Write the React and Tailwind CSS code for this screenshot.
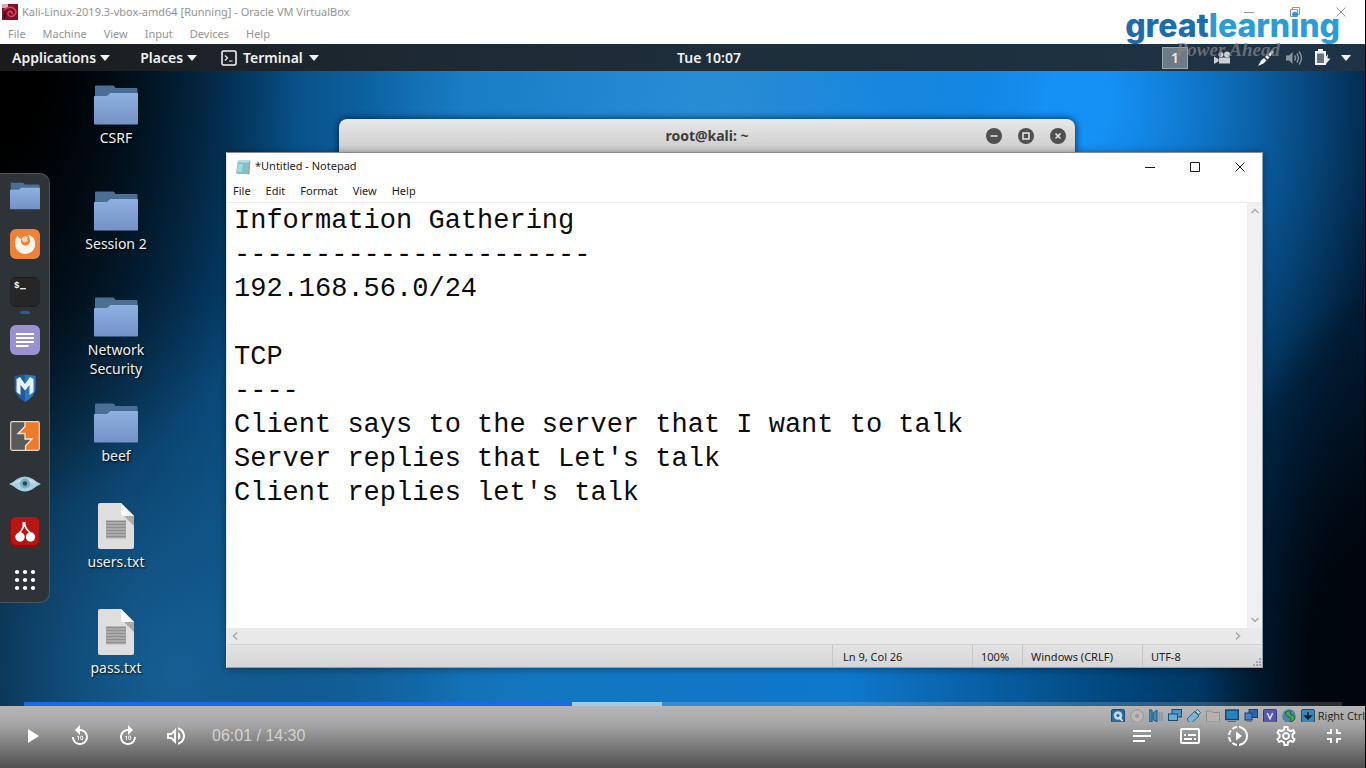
import React from "react";
import {
  MdPlayArrow,
  MdReplay10,
  MdForward10,
  MdOutlineVolumeUp,
  MdNotes,
  MdOutlineSubtitles,
  MdOutlineSlowMotionVideo,
  MdOutlineSettings,
  MdFullscreenExit,
} from "react-icons/md";

const NOTE = [
  "Information Gathering",
  "----------------------",
  "192.168.56.0/24",
  "",
  "TCP",
  "----",
  "Client says to the server that I want to talk",
  "Server replies that Let's talk",
  "Client replies let's talk",
].join("\n");

function Folder({ className }) {
  return (
    <svg viewBox="0 0 44 40" className={className} aria-hidden="true">
      <defs>
        <linearGradient id="folderFront" x1="0" y1="0" x2="0" y2="1">
          <stop offset="0" stopColor="#8db1e0" />
          <stop offset="1" stopColor="#7591c6" />
        </linearGradient>
      </defs>
      <path d="M1 1.5Q1 .5 2 .5H19Q20 .5 20.500 1.500L21.500 3H42.500Q43.500 3 43.500 4V20H1Z" fill="#4b6f94" />
      <path d="M0 12Q0 11 1 11H13L16.500 8H43Q44 8 44 9V38.500Q44 39.500 43 39.500H1Q0 39.500 0 38.500Z" fill="url(#folderFront)" />
    </svg>
  );
}

function TextFile({ className }) {
  return (
    <svg viewBox="0 0 36 46" className={className} aria-hidden="true">
      <path d="M2 0H23L36 13V44Q36 46 34 46H2Q0 46 0 44V2Q0 0 2 0Z" fill="#dedede" />
      <path d="M26 13H36V23Z" fill="#a9a9a9" />
      <path d="M23 0L36 13H25Q23 13 23 11Z" fill="#f8f8f8" />
      <path d="M8 17.500H28V35.500H8Z" fill="#b4b4b4" />
      <path d="M8 18.500H28M8 21.500H28M8 24.500H28M8 27.500H28M8 30.500H28M8 33.500H28" stroke="#8d8d8d" strokeWidth="1.300" />
    </svg>
  );
}

function Caret() {
  return (
    <svg viewBox="0 0 10 6" className="h-1.5 w-2.5" aria-hidden="true">
      <path d="M0 0H10L5 6Z" fill="#f2f2f2" />
    </svg>
  );
}

const dockIcons = [
  { name: "Files", art: <Folder className="h-7 w-[30px]" /> },
  {
    name: "Firefox",
    art: (
      <svg viewBox="0 0 30 30" className="size-[30px]">
        <rect width="30" height="30" rx="6" fill="#ee8239" />
        <path d="M5 13.500C5.500 9.500 6.500 8 7.500 6.500C8.500 8.500 9.500 9.500 11 10C10.500 13 11.500 16 14.500 16.500C17.500 17 20 15 20 12C20 10 19.500 8 18 6C22.500 6.500 25.500 10.500 25.200 15.500C24.500 21.500 20.500 25 15 25C9 25 4.800 20 5 13.500Z" fill="#fff4e8" />
        <path d="M11.500 10C13 7 16 6.500 18.500 8.500C17 9 16.500 10 18 12L14.500 13.500C13 13 12 11.500 11.500 10Z" fill="#f9d3b4" />
      </svg>
    ),
  },
  {
    name: "Terminal",
    running: true,
    art: (
      <svg viewBox="0 0 30 30" className="size-[30px]">
        <rect width="30" height="30" rx="6" fill="#1d1d1d" />
        <rect y="1" width="30" height="28" rx="5" fill="#262626" />
        <text x="4" y="11" fontSize="9" fontWeight="700" fill="#fff" fontFamily="Liberation Mono, monospace">$</text>
        <path d="M10 11.700H16" stroke="#eee" strokeWidth="1.300" />
      </svg>
    ),
  },
  {
    name: "Text Editor",
    art: (
      <svg viewBox="0 0 30 30" className="size-[30px]">
        <rect width="30" height="30" rx="6" fill="#9c91cf" />
        <path d="M6 9H24M6 13H24M6 17H24M6 21H18.500" stroke="#fff" strokeWidth="2" />
      </svg>
    ),
  },
  {
    name: "Metasploit",
    art: (
      <svg viewBox="0 0 30 30" className="size-[30px]">
        <path d="M4.500 3Q15 0 25.500 3V16Q25 23 15 29Q5 23 4.500 16Z" fill="#1f5c9c" />
        <path d="M15 2V29Q25 23 25.500 16V3Q20 1.500 15 2Z" fill="#2b78bd" />
        <path d="M6.500 6L10 4L15 11L20 4L23.500 6V19L19.500 22V12L15 17.500L10.500 12V22L6.500 19Z" fill="#e8f1f9" />
      </svg>
    ),
  },
  {
    name: "Burp Suite",
    art: (
      <svg viewBox="0 0 30 30" className="size-[30px]">
        <rect x=".5" y=".5" width="29" height="29" rx="1.500" fill="#5a5a5a" />
        <path d="M15 1H29V29H15.500V25.500L22.500 18H15V12.500H8L15 5Z" fill="#ee7a2b" />
        <path d="M15 1V5.500L8 12.500H15V18H22L15.500 25V29" fill="none" stroke="#f3e9dc" strokeWidth="1.300" />
        <rect x=".7" y=".7" width="28.600" height="28.600" rx="1.500" fill="none" stroke="#e0d6ca" strokeWidth="1.200" />
      </svg>
    ),
  },
  {
    name: "Zenmap",
    art: (
      <svg viewBox="0 0 32 30" className="h-[30px] w-8">
        <path d="M0 15Q4 13.500 8 10Q16 5 24 10Q28 13.500 32 15Q27 17 23 20.500Q16 24.500 9 20.500Q5 17 0 15Z" fill="#a9cfe0" />
        <path d="M4 14.500Q16 5.500 28 14.500Q16 9.500 4 14.500Z" fill="#d5e9f1" />
        <circle cx="16" cy="14.500" r="5" fill="#7babc1" />
        <circle cx="16" cy="14.500" r="2.200" fill="#1f4b63" />
      </svg>
    ),
  },
  {
    name: "CherryTree",
    art: (
      <svg viewBox="0 0 30 30" className="size-[30px]">
        <rect width="30" height="30" rx="5" fill="#8f0d0d" />
        <rect x="1" width="28" height="28" rx="5" fill="#b91515" />
        <path d="M14 6C14 11 11.500 13.500 9.500 16M14 6C15 11 18 14 20.500 16" stroke="#fff" strokeWidth="1.600" fill="none" />
        <path d="M12.500 5H15.500V9H12.500Z" fill="#fff" />
        <circle cx="10" cy="20" r="4.700" fill="#fff" />
        <circle cx="20.500" cy="20" r="4.700" fill="#fff" />
      </svg>
    ),
  },
  {
    name: "Show Applications",
    art: (
      <svg viewBox="0 0 30 30" className="size-[30px]" fill="#fff">
        {[7, 15, 23].map((y) => [7, 15, 23].map((x) => <circle key={x + "-" + y} cx={x} cy={y} r="2.100" />))}
      </svg>
    ),
  },
];

const desktopItems = [
  { label: "CSRF", type: "folder" },
  { label: "Session 2", type: "folder" },
  { label: "Network Security", type: "folder" },
  { label: "beef", type: "folder" },
  { label: "users.txt", type: "file" },
  { label: "pass.txt", type: "file" },
];

function WindowGlyph({ kind }) {
  const d = {
    min: "M0 5.500H10",
    max: "M.5 .5H9.500V9.500H.5Z",
    restore: "M.5 2.500H7.500V9.500H.5ZM2.500 2.500V.5H9.500V7.500H7.500",
    close: "M.5 .5L9.500 9.500M9.500 .5L.5 9.500",
  }[kind];
  return (
    <svg viewBox="0 0 10 10" className="size-2.5 overflow-visible" fill="none" stroke="currentColor" aria-hidden="true">
      <path d={d} />
    </svg>
  );
}

function MachineHeader() {
  return (
    <header className="bg-white font-['Noto_Sans',sans-serif] text-[11px] text-[#949494]">
      <div className="flex h-6 items-center pr-0.5">
        <svg viewBox="0 0 16 16" className="ml-0.5 size-4" aria-hidden="true">
          <rect width="16" height="16" fill="#7d1228" />
          <path d="M0 0H6V4H0Z" fill="#d8a9b3" />
          <path d="M2 6Q7 1.500 12 4.500Q16 8 12 11.500Q8 14 6 10.500Q5.500 7 9 7.500Q11 8.500 9.500 10" fill="none" stroke="#e9405e" strokeWidth="1.500" />
          <path d="M1 12L4 8L3 15Z" fill="#3a0813" />
        </svg>
        <h1 className="ml-1 grow">Kali-Linux-2019.3-vbox-amd64 [Running] - Oracle VM VirtualBox</h1>
        {["min", "restore", "close"].map((kind) => (
          <button key={kind} aria-label={kind} className="flex h-5 w-[46px] items-center justify-center">
            <WindowGlyph kind={kind} />
          </button>
        ))}
      </div>
      <nav className="flex h-5 items-center gap-[17px] px-2">
        {["File", "Machine", "View", "Input", "Devices", "Help"].map((m) => (
          <button key={m}>{m}</button>
        ))}
      </nav>
    </header>
  );
}

function Brand() {
  return (
    <div className="pointer-events-none absolute top-2 right-[26px] z-10">
      <div className="font-['Inter',sans-serif] text-[32px] leading-9 font-extrabold text-[#2a9dd6]">
        <span className="text-[#1d6cae]">great</span>learning
      </div>
      <div className="-mt-1 pr-15 text-right font-['Liberation_Serif',serif] text-[19px] leading-5 font-bold text-[#87898b]/70 italic">
        Power Ahead
      </div>
    </div>
  );
}

function TopBar() {
  return (
    <div className="grid h-[27px] grid-cols-[13fr_auto_12fr] items-center bg-linear-to-r from-[#1b1b1c] via-[#1d2b36] via-35% to-[#1e3446] font-['Noto_Sans',sans-serif] text-sm font-semibold text-[#f0f0f0]">
      <nav className="flex items-center gap-[30px] pl-3">
        <button className="flex items-center gap-1">Applications <Caret /></button>
        <button className="flex items-center gap-1">Places <Caret /></button>
        <button className="-ml-1.5 flex items-center gap-1.5">
          <svg viewBox="0 0 16 16" className="size-4" fill="none" stroke="#f2f2f2" aria-hidden="true">
            <rect x="1" y="1" width="14" height="14" rx="1.500" strokeWidth="1.600" />
            <path d="M4 5.500L6.500 8L4 10.500M8 11H11.500" strokeWidth="1.200" />
          </svg>
          Terminal <Caret />
        </button>
      </nav>
      <time>Tue 10:07</time>
      <div className="flex items-center justify-end pr-[15px]">
        <button className="mr-[26px] h-[22px] w-[26px] border border-[#9ba5ac] bg-[#6d7b86]">1</button>
        <svg viewBox="0 0 17 14" className="mr-[27px] h-3.5 w-[17px]" fill="#c9ced2" aria-hidden="true">
          <circle cx="7" cy="3.500" r="2.500" />
          <circle cx="13" cy="3.500" r="3" />
          <path d="M5 6.500H16V12.500H5ZM0 5.500L4.500 8V10.500L0 13Z" />
        </svg>
        <svg viewBox="0 0 16 16" className="mr-3 size-4" fill="#eef0f1" aria-hidden="true">
          <path d="M0 16L3 10.500L6 8L8.500 10.500L5.500 13.500ZM7 7L9 5L11.500 7.500L9.500 9.500ZM10 5L14 0L16 2L12 6.500Z" />
        </svg>
        <svg viewBox="0 0 17 16" className="mr-3 h-4 w-[17px]" fill="none" stroke="#8a959c" strokeWidth="1.400" aria-hidden="true">
          <path d="M0 5.500H3L6.500 2V14L3 10.500H0Z" fill="#8a959c" stroke="none" />
          <path d="M8.500 5.500Q10.500 8 8.500 10.500M10.800 3.500Q14 8 10.800 12.500M13 1.500Q18 8 13 14.500" />
        </svg>
        <svg viewBox="0 0 16 17" className="mr-2.5 h-[17px] w-4" aria-hidden="true">
          <path d="M3 0H8V2H11V16H0V2H3Z" fill="#f3f4f4" />
          <path d="M2 4.500H9V14H2Z" fill="#65727c" />
          <path d="M13 5L8.500 11H11L10 16L15.500 9.500H12.500Z" fill="#f3f4f4" />
        </svg>
        <Caret />
      </div>
    </div>
  );
}

function Dock() {
  return (
    <nav className="mt-[102px] flex h-[430px] w-[50px] shrink-0 flex-col items-center justify-center rounded-r-[10px] border border-l-0 border-[#4a555b] bg-[#2d3336]">
      {dockIcons.map((i) => (
        <button key={i.name} aria-label={i.name} className="relative flex h-12 w-full shrink-0 items-center justify-center">
          {i.art}
          {i.running && <span className="absolute bottom-0.5 h-[3px] w-2.5 rounded-sm bg-[#215f9f]" />}
        </button>
      ))}
    </nav>
  );
}

function TerminalWindow() {
  return (
    <section className="absolute top-12 right-[291px] left-[339px] h-40 overflow-hidden rounded-t-lg bg-black shadow-[0_0_6px_1px_rgba(0,20,50,0.7)]">
      <div className="grid h-[33px] grid-cols-[1fr_auto_1fr] items-center bg-linear-to-b from-[#e8e8e8] to-[#cccccc]">
        <h2 className="col-start-2 font-['Noto_Sans',sans-serif] text-sm font-bold text-[#3d3d3d]">root@kali: ~</h2>
        <div className="flex justify-end gap-4 pr-[9px]">
          {[
            ["minimise", "M4.500 8H11.500"],
            ["maximise", "M5 5H11V11H5Z"],
            ["close", "M5.500 5.500L10.500 10.500M10.500 5.500L5.500 10.500"],
          ].map(([name, d]) => (
            <button key={name} aria-label={name}>
              <svg viewBox="0 0 16 16" className="size-4">
                <circle cx="8" cy="8" r="8" fill="#505050" />
                <path d={d} fill="none" stroke="#e8e8e8" strokeWidth="1.500" />
              </svg>
            </button>
          ))}
        </div>
      </div>
    </section>
  );
}

function Chevron({ d }) {
  return (
    <svg viewBox="0 0 8 8" className="size-2" fill="none" stroke="#a9a9a9" strokeWidth="1.500" aria-hidden="true">
      <path d={d} />
    </svg>
  );
}

function Notepad() {
  return (
    <section className="absolute top-[81px] right-[103px] bottom-[38px] left-[226px] flex flex-col border border-[#8fa3b5] border-t-[#8b8b8b] border-l-[#dfe5ea] bg-white font-['Noto_Sans',sans-serif] text-[11px] text-[#1d1d1d] shadow-[0_1px_8px_rgba(0,0,0,0.4)]">
      <div className="flex h-[27px] shrink-0 items-center">
        <svg viewBox="0 0 16 16" className="ml-2 size-4" aria-hidden="true">
          <path d="M4 1L15.500 1.500L14.500 15.500L2 14.500Z" fill="#a8a8a0" />
          <path d="M3 1H14L12.500 14.500H1Z" fill="#7fc0cf" />
          <path d="M3 1H14L13.700 3.500H2.500Z" fill="#b9dbe3" />
          <path d="M3 5H8L7 13H2Z" fill="#a5d6e0" />
        </svg>
        <h2 className="ml-1 grow">*Untitled - Notepad</h2>
        {["min", "max", "close"].map((kind) => (
          <button key={kind} aria-label={kind} className="flex h-7 w-[45px] items-center justify-center">
            <WindowGlyph kind={kind} />
          </button>
        ))}
      </div>
      <nav className="flex h-[23px] shrink-0 items-center gap-[15px] border-b border-[#ececec] px-1.5">
        {["File", "Edit", "Format", "View", "Help"].map((m) => (
          <button key={m}>{m}</button>
        ))}
      </nav>
      <div className="flex min-h-0 grow">
        <textarea
          aria-label="Note text"
          spellCheck={false}
          defaultValue={NOTE}
          className="grow resize-none overflow-hidden px-[7px] pt-px font-['Liberation_Mono',monospace] text-[27px] leading-[34px] whitespace-pre text-[#0c0c0c] outline-none"
        />
        <div className="flex w-[15px] flex-col items-center justify-between bg-[#f0f0f0] py-1">
          <Chevron d="M.5 6L4 2.500L7.500 6" />
          <Chevron d="M.5 2L4 5.500L7.500 2" />
        </div>
      </div>
      <div className="flex h-[17px] shrink-0 items-center justify-between border-b border-[#d2d2d2] bg-[#e9e9e9] pr-5 pl-1">
        <Chevron d="M6 .5L2.500 4L6 7.500" />
        <Chevron d="M2 .5L5.500 4L2 7.500" />
      </div>
      <footer className="relative flex h-[22px] shrink-0 items-stretch justify-end bg-linear-to-b from-[#e3e3e3] to-[#d6d6d6] leading-6">
        <span className="w-[140px] border-l border-[#c6c6c6] pl-2.5">Ln 9, Col 26</span>
        <span className="w-[50px] border-l border-[#c6c6c6] pl-2">100%</span>
        <span className="w-[120px] border-l border-[#c6c6c6] pl-2">Windows (CRLF)</span>
        <span className="w-[120px] border-l border-[#c6c6c6] pl-2">UTF-8</span>
        <svg viewBox="0 0 9 9" className="absolute right-0 bottom-0 size-[9px]" fill="#a3a3a3" aria-hidden="true">
          <path d="M6 0H8V2H6ZM3 3H5V5H3ZM6 3H8V5H6ZM0 6H2V8H0ZM3 6H5V8H3ZM6 6H8V8H6Z" />
        </svg>
      </footer>
    </section>
  );
}

const statusIcons = [
  <g key="hd"><rect x=".5" y=".5" width="13" height="13" rx="1.500" fill="#2f6a9e" stroke="#1d4c78" /><circle cx="7" cy="6.500" r="4.300" fill="#bcd9ea" /><circle cx="7" cy="6.500" r="1.600" fill="#2f6a9e" /><path d="M8 8L11.500 12" stroke="#e3eef4" strokeWidth="1.600" /></g>,
  <g key="cd"><circle cx="7" cy="7" r="6.300" fill="#b9b9b9" stroke="#939393" /><circle cx="7" cy="7" r="2" fill="#999" /></g>,
  <g key="audio"><path d="M0 1H3V13H0ZM4 4L8 1V13L4 10.500Z" fill="#3b8fc4" stroke="#1d5580" /><path d="M10.500 3V12M12.800 3V12" stroke="#7f97a8" strokeWidth="1.600" /></g>,
  <g key="net"><rect x="4" y=".5" width="9.500" height="7.500" fill="#4b95c6" stroke="#1f4a70" /><rect x=".5" y="5" width="9" height="6.500" fill="#63aedb" stroke="#1f4a70" /><path d="M2 13.500H9" stroke="#345" /></g>,
  <g key="usb"><path d="M0 10L7.500 2.500L12 7L5 13.500Q1 14 0 10Z" fill="#7db3d4" stroke="#2d5f85" /><path d="M8.500 2.500L10.500 .5L13.500 3.500L11.500 6Z" fill="#b7cedc" stroke="#2d5f85" /></g>,
  <g key="shared"><path d="M.5 2H5.500L7 3.500H13.500V13H.5Z" fill="#b3b3b3" stroke="#8e8e8e" /></g>,
  <g key="display"><rect x=".7" y="1" width="12.600" height="9.500" fill="#2386c4" stroke="#1c4468" strokeWidth="1.400" /><path d="M3 13H11" stroke="#33506a" strokeWidth="1.500" /></g>,
  <g key="rec"><rect x="5" y=".5" width="8.500" height="8" fill="#2e65ac" stroke="#1c3b78" /><rect x="1" y="4" width="7" height="7" fill="#4580c5" stroke="#1c3b78" /><path d="M3 13H8" stroke="#354f7c" /></g>,
  <g key="cpu"><rect x=".5" y=".5" width="13" height="13" rx="1" fill="#5359ae" stroke="#36397c" /><path d="M4.300 4L7 9.800L9.700 4" fill="none" stroke="#e4e5f5" strokeWidth="1.500" /></g>,
  <g key="mouse"><circle cx="7" cy="7" r="6.800" fill="#4a86a9" /><path d="M3 4Q6 1 9 2L8 5L12 7Q14 10 11 12L8 13L9 9L5 7Z" fill="#3fae4f" stroke="#246138" /></g>,
  <g key="host"><rect x=".5" y=".5" width="13" height="13" rx="1.500" fill="#3a86b6" stroke="#22506f" /><path d="M7 3V9M4 7L7 10L10 7Z" fill="#10263a" stroke="#10263a" strokeWidth="1.500" /></g>,
];

function PlayerButton({ label, icon: Icon }) {
  return (
    <button aria-label={label} className="flex h-7 w-12 items-center justify-center text-white">
      <Icon className="size-6" />
    </button>
  );
}

function Player() {
  return (
    <footer className="h-[62px] shrink-0 bg-linear-to-b from-[#b6b6b6] via-[#a6a6a6] via-30% to-[#505050]">
      <div className="flex h-4 items-center justify-end gap-[5px] overflow-hidden pt-[3px] pr-px">
        {statusIcons.map((art) => (
          <svg key={art.key} viewBox="0 0 14 14" className="size-3.5 shrink-0" aria-hidden="true">{art}</svg>
        ))}
        <span className="-ml-0.5 font-['Open_Sans','Noto_Sans',sans-serif] text-[11px] leading-4 text-[#1e1e1e]">Right Ctrl</span>
      </div>
      <div className="flex items-center px-2">
        <PlayerButton label="Play" icon={MdPlayArrow} />
        <PlayerButton label="Back 10 seconds" icon={MdReplay10} />
        <PlayerButton label="Forward 10 seconds" icon={MdForward10} />
        <PlayerButton label="Mute" icon={MdOutlineVolumeUp} />
        <span className="ml-3 grow font-['Liberation_Sans',sans-serif] text-base text-white/60">06:01 / 14:30</span>
        <PlayerButton label="Transcript" icon={MdNotes} />
        <PlayerButton label="Captions" icon={MdOutlineSubtitles} />
        <PlayerButton label="Playback speed" icon={MdOutlineSlowMotionVideo} />
        <PlayerButton label="Settings" icon={MdOutlineSettings} />
        <PlayerButton label="Exit full screen" icon={MdFullscreenExit} />
      </div>
    </footer>
  );
}

export default function App() {
  return (
    <div className="relative flex min-h-screen flex-col bg-black">
      <MachineHeader />
      <Brand />
      <TopBar />
      <main className="relative flex grow items-start bg-[#001a30] bg-[radial-gradient(ellipse_22%_70%_at_0%_0%,#000_15%,transparent),radial-gradient(ellipse_26%_62%_at_13%_95%,#165f94,transparent),radial-gradient(ellipse_12%_60%_at_100%_95%,#00060e_35%,transparent),radial-gradient(ellipse_24%_60%_at_79%_5%,#1590f4_10%,transparent),radial-gradient(ellipse_25%_70%_at_52%_8%,#2a8dd6,transparent),linear-gradient(to_right,#02121f_0%,#05477a_18%,#1376bd_34%,#0f78cc_62%,#004173_84%,#001b33_100%)]">
        <Dock />
        <div className="flex w-[132px] flex-col items-center gap-[18px] pt-1.5">
          {desktopItems.map((item) => (
            <button key={item.label} className="flex h-[88px] w-20 flex-col items-center">
              <span className="flex h-12 shrink-0 items-end">
                {item.type === "folder" ? <Folder className="h-10 w-11" /> : <TextFile className="h-[46px] w-9" />}
              </span>
              <span className="mt-[3px] font-['Noto_Sans',sans-serif] text-sm leading-[19px] text-[#f2f2f2] [text-shadow:1px_1px_2px_#000]">
                {item.label}
              </span>
            </button>
          ))}
        </div>
        <TerminalWindow />
        <Notepad />
        <input
          type="range"
          aria-label="Seek"
          min="0"
          max="870"
          defaultValue="361"
          className="absolute right-6 bottom-0 left-6 h-1 appearance-none bg-[linear-gradient(to_right,#1a6ae8_41.6%,#a3cbe6_41.6%,#a3cbe6_48.4%,rgba(255,255,255,0.16)_48.4%)] [&::-webkit-slider-thumb]:size-0 [&::-webkit-slider-thumb]:appearance-none"
        />
      </main>
      <Player />
      <div className="pointer-events-none absolute inset-y-0 right-0 w-px bg-black" />
    </div>
  );
}
